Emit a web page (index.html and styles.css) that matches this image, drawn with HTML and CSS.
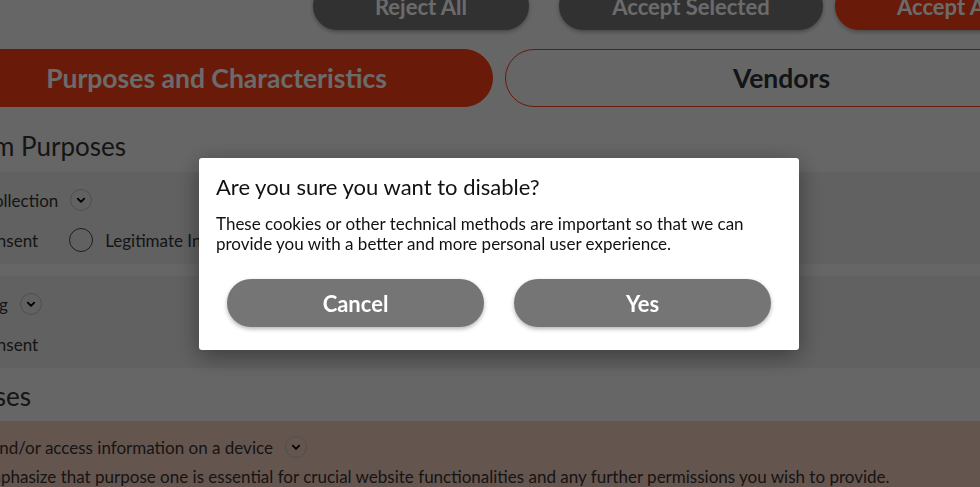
FILE: index.html
```html
<!DOCTYPE html>
<html lang="en">
<head>
<meta charset="utf-8">
<title>Privacy preferences</title>
<link rel="stylesheet" href="styles.css">
</head>
<body>
<div class="page">
  <div class="actions">
    <button class="btn btn-dark btn-reject">Reject All</button>
    <button class="btn btn-dark btn-selected">Accept Selected</button>
    <button class="btn btn-accent btn-all">Accept All</button>
  </div>

  <div class="tabs">
    <div class="tab tab-active">Purposes and Characteristics</div>
    <div class="tab">Vendors</div>
  </div>

  <h2 class="section-title">Custom Purposes</h2>

  <div class="row">
    <div class="row-head">
      <span class="row-name">Data collection</span>
      <span class="chev"><svg viewBox="0 0 22 22" width="22" height="22"><polyline points="7.5,9.5 11,13 14.5,9.5" fill="none" stroke="#000" stroke-width="2" stroke-linecap="round" stroke-linejoin="round"/></svg></span>
    </div>
    <div class="opts">
      <label class="opt"><span class="radio"></span>Consent</label>
      <label class="opt"><span class="radio"></span>Legitimate Interest</label>
    </div>
  </div>

  <div class="row">
    <div class="row-head">
      <span class="row-name">Tracking</span>
      <span class="chev"><svg viewBox="0 0 22 22" width="22" height="22"><polyline points="7.5,9.5 11,13 14.5,9.5" fill="none" stroke="#000" stroke-width="2" stroke-linecap="round" stroke-linejoin="round"/></svg></span>
    </div>
    <div class="opts">
      <label class="opt"><span class="radio"></span>Consent</label>
    </div>
  </div>

  <h2 class="section-title section-title-2">Purposes</h2>

  <div class="row row-pink">
    <div class="row-head">
      <span class="row-name">Store and/or access information on a device</span>
      <span class="chev"><svg viewBox="0 0 22 22" width="22" height="22"><polyline points="7.5,9.5 11,13 14.5,9.5" fill="none" stroke="#000" stroke-width="2" stroke-linecap="round" stroke-linejoin="round"/></svg></span>
    </div>
    <p class="row-desc">We emphasize that purpose one is essential for crucial website functionalities and any further permissions you wish to provide.</p>
  </div>
</div>

<div class="overlay">
  <div class="modal" role="dialog" aria-modal="true">
    <h3 class="modal-title">Are you sure you want to disable?</h3>
    <p class="modal-text">These cookies or other technical methods are important so that we can provide you with a better and more personal user experience.</p>
    <div class="modal-actions">
      <button class="btn btn-gray">Cancel</button>
      <button class="btn btn-gray">Yes</button>
    </div>
  </div>
</div>
</body>
</html>
```

FILE: styles.css
```css
* { box-sizing: border-box; }

html, body {
  margin: 0;
  padding: 0;
  height: 100%;
  overflow: hidden;
}

body {
  background: #f3f3f3;
  font-family: Lato, "Liberation Sans", sans-serif;
  color: #333;
}

.page {
  width: 1118px;
  margin-left: -60px;
  margin-top: -18px;
}

.btn {
  font-family: inherit;
  font-weight: 700;
  font-size: 22px;
  border: none;
  color: #fff;
  height: 48px;
  border-radius: 24px;
  padding: 0;
  box-shadow: 0 2px 4px rgba(0, 0, 0, 0.3);
  cursor: pointer;
}

.actions {
  display: flex;
  justify-content: flex-end;
  gap: 12px;
}

.btn-dark { background: #757575; }
.btn-accent { background: #fa3e13; }
.btn-reject { width: 216px; margin-right: 18px; }
.btn-selected { width: 264px; }
.btn-all { width: 223px; }

.tabs {
  display: flex;
  gap: 12px;
  margin-top: 19px;
}

.tab {
  flex: 1;
  height: 58px;
  border-radius: 29px;
  border: 1px solid #fa3e13;
  display: flex;
  align-items: center;
  justify-content: center;
  font-size: 26.5px;
  font-weight: 700;
  color: #2d3036;
}

.tab-active {
  background: #fa3e13;
  color: #fff;
}

.section-title {
  margin: 23px 0 10px -14px;
  font-size: 26px;
  font-weight: 400;
  line-height: 32px;
  color: #333;
}

.section-title-2 {
  margin: 12px 0 9px -14px;
}

.row {
  background: #e7e7e7;
  padding: 14px 0 10px;
  margin-bottom: 12px;
  font-size: 17px;
  color: #333;
}

.row-head {
  display: flex;
  align-items: center;
  gap: 12px;
  height: 28px;
  padding-left: 6px;
}

.chev {
  width: 22px;
  height: 22px;
  border-radius: 50%;
  border: 1px solid #bbb;
  display: flex;
  align-items: center;
  justify-content: center;
}

.chev svg { display: block; }

.opts {
  display: flex;
  align-items: center;
  height: 28px;
  margin-top: 12px;
}

.opt {
  display: flex;
  align-items: center;
  gap: 12px;
  margin-right: 31px;
}

.radio {
  width: 24px;
  height: 24px;
  border-radius: 50%;
  border: 1.5px solid #444;
}

.row-pink {
  background: #f1cbbd;
  padding-top: 12px;
  margin-bottom: 0;
  height: 200px;
}

.row-pink .row-head { padding-left: 7px; }

.row-desc {
  margin: 4px 0 0;
  line-height: 24px;
  padding-left: 8px;
}

.overlay {
  position: fixed;
  inset: 0;
  background: rgba(0, 0, 0, 0.58);
}

.modal {
  width: 600px;
  height: 192px;
  margin: 158px 0 0 199px;
  background: #fff;
  border-radius: 3px;
  padding: 16px 17px 0;
  box-shadow: 0 6px 24px rgba(0, 0, 0, 0.4);
  color: #111;
}

.modal-title {
  margin: 0;
  font-size: 22px;
  font-weight: 400;
  line-height: 26px;
}

.modal-text {
  margin: 14px 0 0;
  font-size: 17px;
  line-height: 20px;
}

.modal-actions {
  display: flex;
  gap: 30px;
  padding: 0 11px;
  margin-top: 25px;
}

.btn-gray {
  flex: 1;
  background: #757575;
}
```
